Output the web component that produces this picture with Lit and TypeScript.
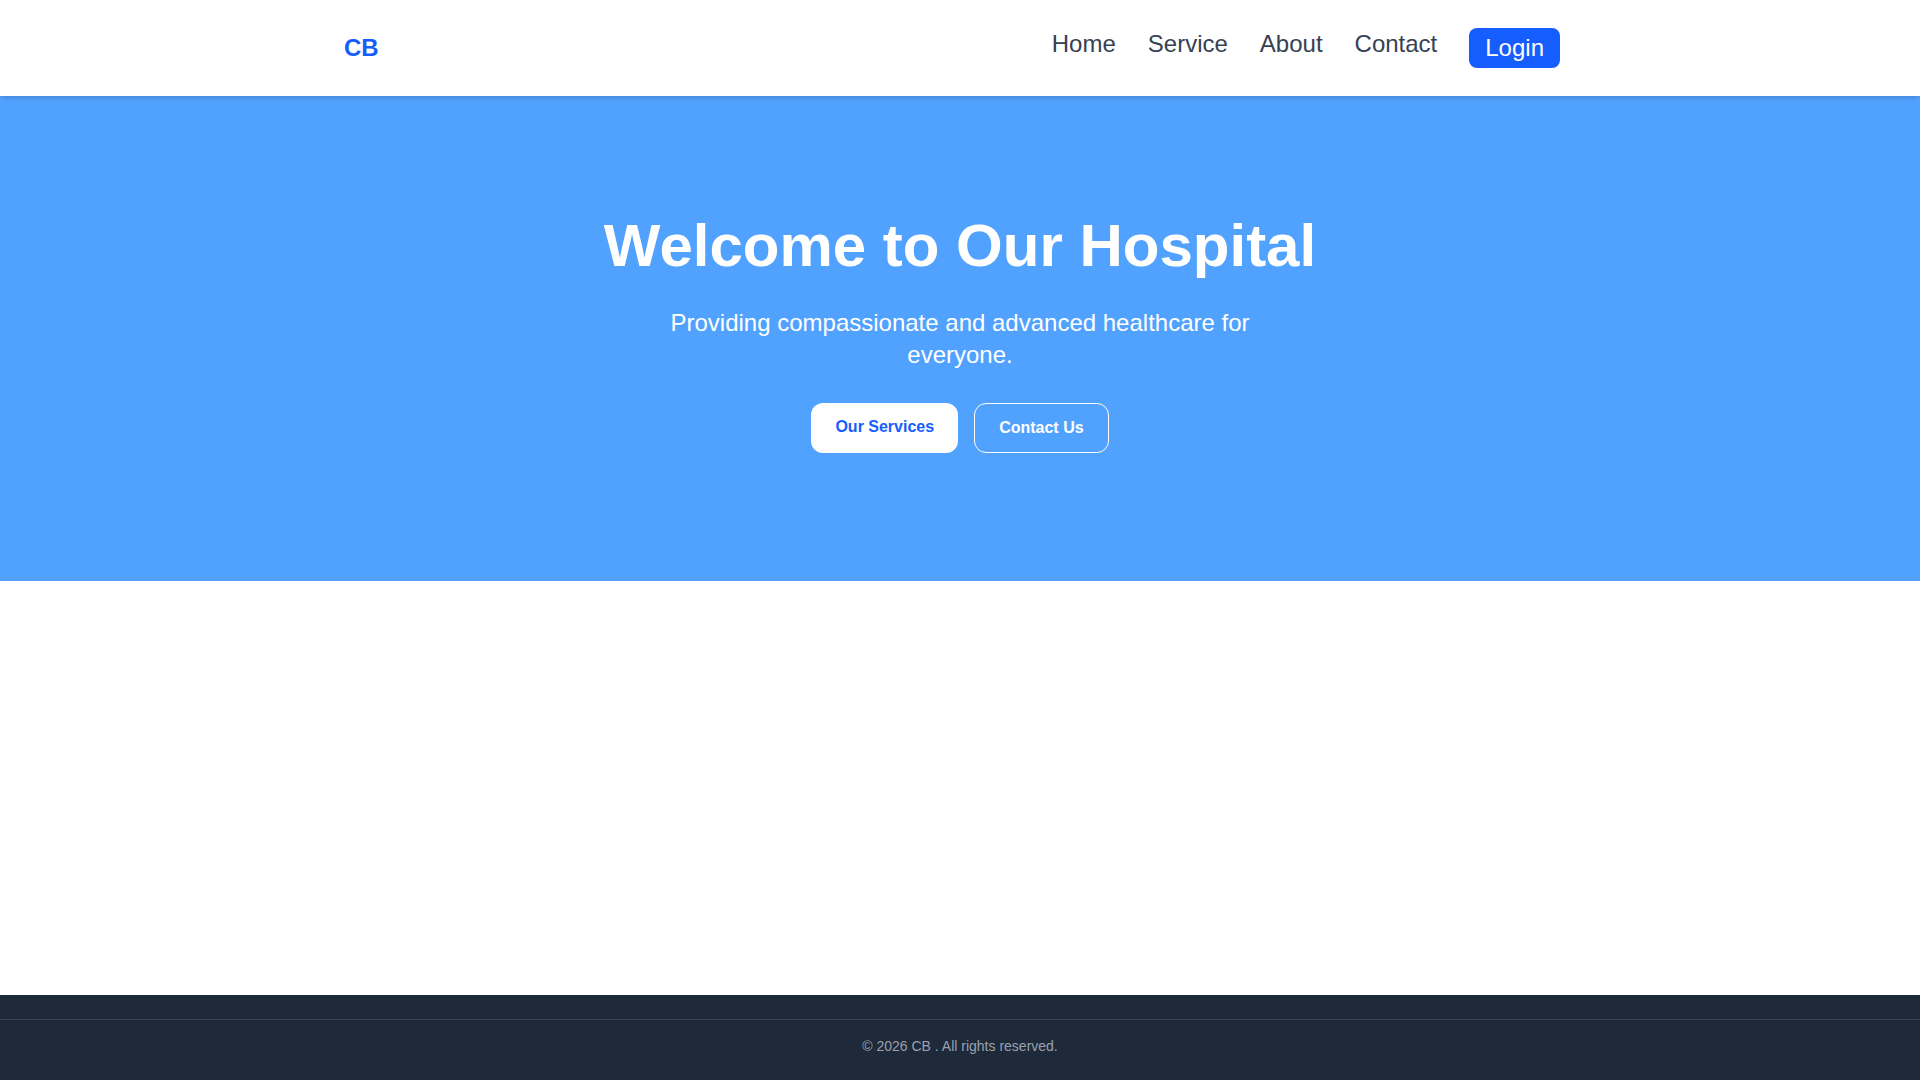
import { LitElement, html, css } from "lit";
import { customElement } from "lit/decorators.js";

@customElement("app-root")
export class AppRoot extends LitElement {
  static styles = css`
    :host {
      display: flex;
      flex-direction: column;
      min-height: 100vh;
      background: #ffffff;
      font-family: "Liberation Sans", Arial, sans-serif;
      font-size: 16px;
      line-height: 24px;
    }
    * {
      box-sizing: border-box;
      margin: 0;
      padding: 0;
    }
    a {
      text-decoration: none;
      color: inherit;
    }
    .header {
      position: relative;
      background: #ffffff;
      box-shadow: 0 4px 6px -1px rgb(0 0 0 / 0.1), 0 2px 4px -2px rgb(0 0 0 / 0.1);
    }
    .bar {
      display: flex;
      align-items: center;
      justify-content: space-between;
      max-width: 1280px;
      margin: 0 auto;
      padding: 28px 40px 28px 24px;
    }
    .bar .brand {
      font-size: 24px;
      line-height: 32px;
      font-weight: 700;
      color: #155dfc;
    }
    .links {
      display: flex;
      align-items: flex-start;
      gap: 32px;
      list-style: none;
      font-size: 24px;
      line-height: 32px;
      color: #364153;
    }
    .login {
      display: block;
      padding: 4px 16px;
      border-radius: 8px;
      background: #155dfc;
      color: #ffffff;
    }
    .hero {
      display: flex;
      flex-direction: column;
      align-items: center;
      padding: 112px 24px 128px;
      background: #51a2ff;
      color: #ffffff;
      text-align: center;
    }
    .title {
      margin-bottom: 24px;
      font-size: 60px;
      line-height: 75px;
      font-weight: 700;
    }
    .lead {
      max-width: 672px;
      margin-bottom: 32px;
      font-size: 24px;
      line-height: 32px;
    }
    .actions {
      display: flex;
      gap: 16px;
    }
    .button {
      padding: 12px 24px;
      border-radius: 12px;
      font-weight: 600;
    }
    .solid {
      background: #ffffff;
      color: #155dfc;
    }
    .outline {
      border: 1px solid #ffffff;
    }
    .footer {
      margin-top: auto;
      padding: 24px 0;
      background: #1e2939;
    }
    .legal {
      padding-top: 16px;
      border-top: 1px solid #364153;
      font-size: 14px;
      line-height: 20px;
      color: #99a1af;
      text-align: center;
    }
  `;

  render() {
    return html`
      <header class="header">
        <div class="bar">
          <a class="brand" href="#home">CB</a>
          <nav aria-label="Main">
            <ul class="links">
              <li><a href="#home">Home</a></li>
              <li><a href="#service">Service</a></li>
              <li><a href="#about">About</a></li>
              <li><a href="#contact">Contact</a></li>
              <li><a class="login" href="#login">Login</a></li>
            </ul>
          </nav>
        </div>
      </header>
      <main>
        <section class="hero">
          <h1 class="title">Welcome to Our Hospital</h1>
          <p class="lead">Providing compassionate and advanced healthcare for everyone.</p>
          <div class="actions">
            <a class="button solid" href="#service">Our Services</a>
            <a class="button outline" href="#contact">Contact Us</a>
          </div>
        </section>
      </main>
      <footer class="footer">
        <p class="legal">© 2026 CB . All rights reserved.</p>
      </footer>
    `;
  }
}
